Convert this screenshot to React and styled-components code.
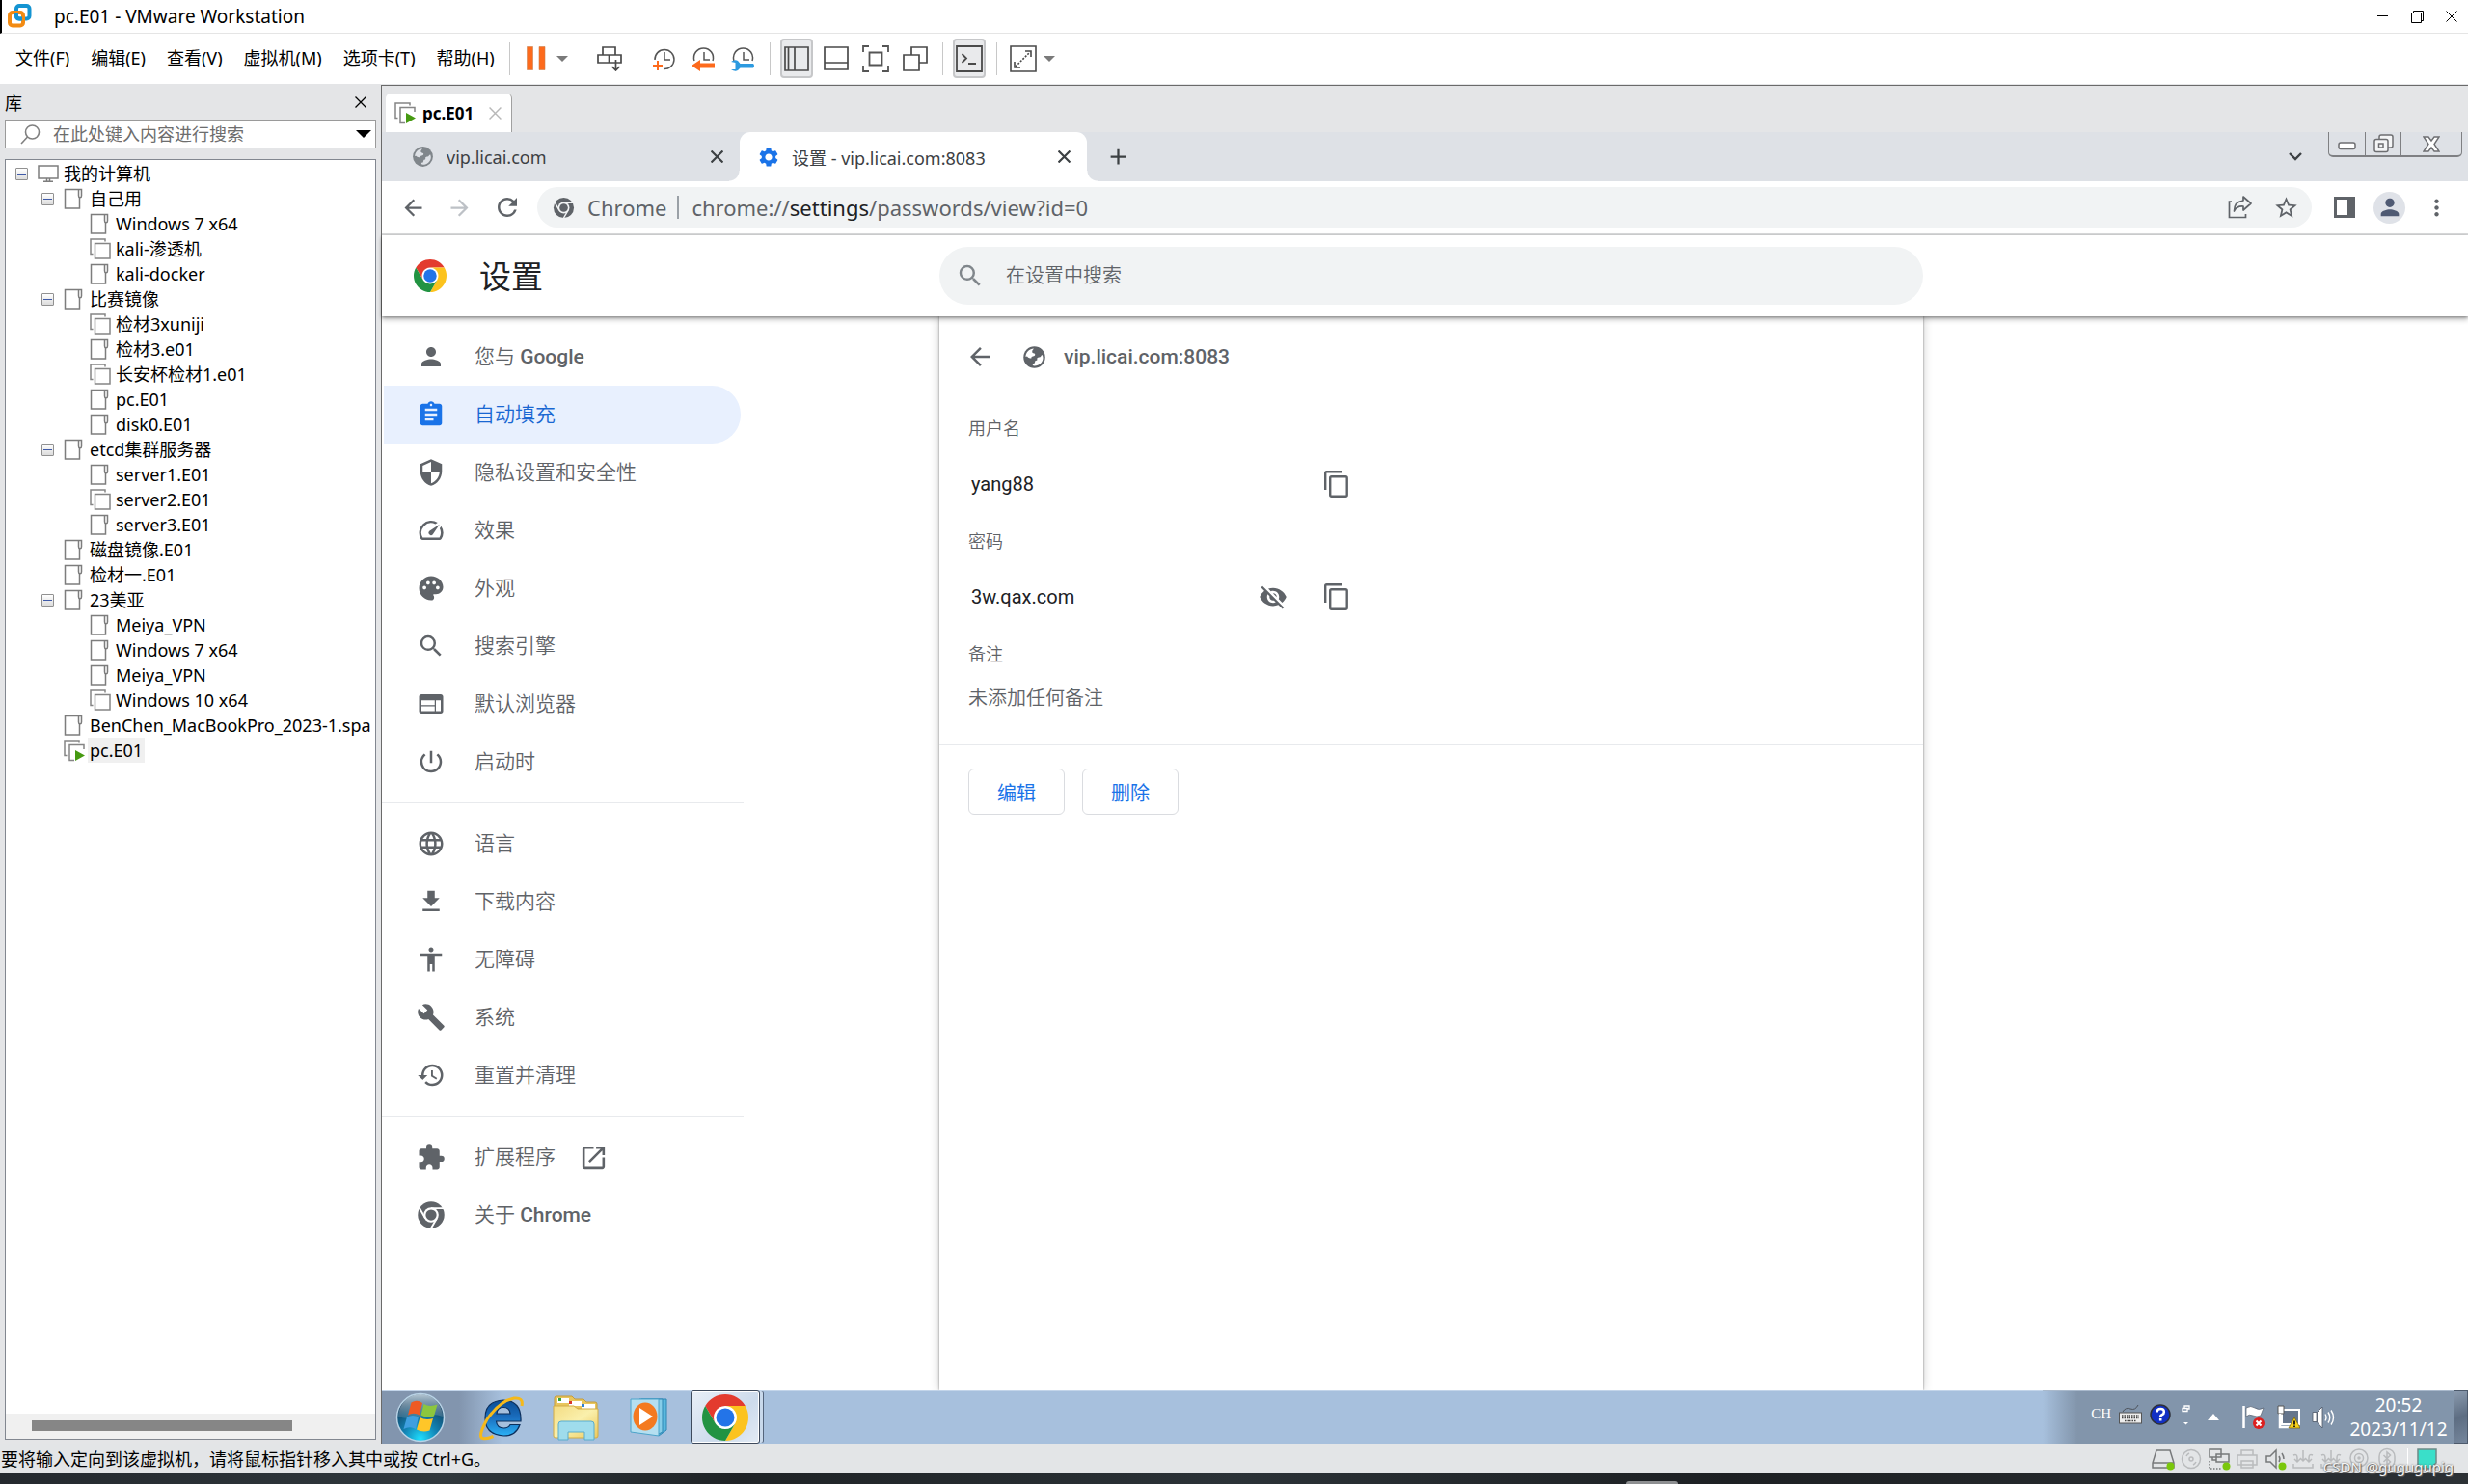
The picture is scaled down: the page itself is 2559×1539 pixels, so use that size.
import React from "react";
import styled, { createGlobalStyle, css } from "styled-components";
import {
    MdPerson, MdAssignment, MdSecurity, MdSpeed, MdPalette, MdSearch, MdWeb, MdPowerSettingsNew,
    MdLanguage, MdFileDownload, MdAccessibility, MdBuild, MdHistory, MdExtension, MdOpenInNew,
    MdVisibilityOff, MdArrowBack, MdArrowForward, MdRefresh, MdStarBorder, MdMoreVert, MdSettings,
    MdAdd,
} from "react-icons/md";

const systemFont = `"Noto Sans", "Noto Sans CJK SC", sans-serif`;
const webFont = `Roboto, "Noto Sans CJK SC", sans-serif`;

const GlobalStyle = createGlobalStyle`
    * {
        box-sizing: border-box;
    }
    body {
        margin: 0;
        background: #23282d;
        font-family: ${systemFont};
        font-size: 18px;
        color: #000;
    }
    button, input {
        font: inherit;
        color: inherit;
    }
    button {
        display: inline-flex;
        align-items: center;
        justify-content: center;
        padding: 0;
        border: none;
        background: transparent;
        cursor: pointer;
    }
    input {
        min-width: 0;
        padding: 0;
        border: none;
        outline: none;
        background: transparent;
    }
    svg {
        display: block;
        flex: none;
    }
`;

const Desktop = styled.div`
    display: flex;
    flex-direction: column;
    height: 100vh;
    overflow: hidden;
`;

/* ---------- host window ---------- */

const TitleBar = styled.header`
    display: flex;
    align-items: center;
    height: 35px;
    flex: none;
    padding: 0 11px 0 6px;
    border-left: 2px solid #000;
    border-bottom: 1px solid #e5e5e5;
    background: #fff;
`;
const WindowTitle = styled.h1`
    margin: 0 auto 0 22px;
    font-size: 19px;
    font-weight: 400;
    line-height: 34px;
`;
const WindowButtons = styled.div`
    display: flex;
    gap: 23px;
`;

const ToolBar = styled.div`
    display: flex;
    align-items: center;
    height: 52px;
    flex: none;
    padding-bottom: 1px;
    background: #fff;
`;
const MenuBar = styled.nav`
    display: flex;
    gap: 22px;
    width: 528px;
    padding: 0 0 3px 16px;
    white-space: nowrap;
`;
const ToolGroup = styled.div`
    display: flex;
    align-items: center;
    gap: 7px;
    height: 34px;
    padding: 0 11px 0 10px;
    border-left: 1px solid #c8c8c8;
`;
const ToolSplit = styled.div`
    display: flex;
    align-items: center;
`;
const ToolButton = styled.button`
    width: 34px;
    height: 41px;
    border-radius: 4px;
    ${({ $pressed }) => $pressed && css`
        border: 2px solid #c6c7c9;
        background: #e9eaec;
    `}
`;
const CaretButton = styled.button`
    width: 20px;
    height: 34px;
`;

const Workspace = styled.div`
    display: flex;
    flex: 1;
    min-height: 0;
    background: #e4e5e7;
`;

/* ---------- library ---------- */

const Library = styled.aside`
    display: flex;
    flex-direction: column;
    width: 395px;
    flex: none;
    padding: 0 5px 5px;
`;
const LibraryHeader = styled.div`
    display: flex;
    align-items: center;
    justify-content: space-between;
    height: 37px;
    padding-right: 10px;
`;
const LibrarySearch = styled.label`
    display: flex;
    align-items: center;
    height: 30px;
    margin-bottom: 11px;
    padding: 0 4px 0 15px;
    border: 1px solid #9a9a9a;
    background: #fff;
    input {
        flex: 1;
        margin-left: 13px;
    }
    input::placeholder {
        color: #6d6d6d;
        opacity: 1;
    }
`;
const TreePanel = styled.div`
    display: flex;
    flex-direction: column;
    flex: 1;
    min-height: 0;
    border: 1px solid #828790;
    background: #fff;
`;
const Tree = styled.ul`
    flex: 1;
    margin: 0;
    padding: 1px 0 0 10px;
    list-style: none;
    overflow: hidden;
`;
const TreeRow = styled.li`
    display: flex;
    align-items: center;
    height: 26px;
    padding-left: ${({ $depth }) => $depth * 27}px;
    white-space: nowrap;
`;
const TreeLabel = styled.span`
    margin-left: -2px;
    padding: 0 2px;
    line-height: 26px;
    ${({ $selected }) => $selected && css`
        background: #f0f0f0;
    `}
`;
const ExpanderSlot = styled.span`
    display: flex;
    width: 23px;
    flex: none;
`;
const IconSlot = styled.span`
    display: flex;
    width: 27px;
    flex: none;
`;
const Expander = styled.button`
    width: 13px;
    height: 13px;
    border: 1px solid #919191;
    border-radius: 1px;
    background: linear-gradient(#fff, #dcdcdc);
    &::before {
        content: '';
        width: 9px;
        height: 1px;
        background: #3f5aa8;
    }
`;
const ScrollTrack = styled.div`
    height: 26px;
    flex: none;
    padding: 7px 86px 7px 27px;
    background: #f0f0f0;
`;
const ScrollThumb = styled.div`
    height: 11px;
    background: #868686;
`;

/* ---------- guest screen ---------- */

const Guest = styled.main`
    display: flex;
    flex-direction: column;
    flex: 1;
    min-width: 0;
    margin-top: 1px;
    border: 1px solid #6a6a6a;
    border-right: none;
`;
const VmTabs = styled.div`
    display: flex;
    align-items: flex-end;
    height: 48px;
    flex: none;
    padding-left: 4px;
`;
const VmTab = styled.div`
    display: flex;
    align-items: center;
    width: 131px;
    height: 40px;
    padding: 0 10px 0 9px;
    border-right: 1px solid #a0a0a0;
    border-radius: 5px 5px 0 0;
    background: #fff;
    font-size: 17px;
    font-weight: 700;
    span {
        margin: 0 auto 0 6px;
    }
`;

const TabStrip = styled.div`
    display: flex;
    align-items: center;
    height: 51px;
    flex: none;
    background: #dee1e6;
    color: #3c4043;
`;
const Tab = styled.div`
    display: flex;
    align-items: center;
    width: 371px;
    height: 51px;
    padding: 0 17px 0 30px;
    span {
        margin: 0 auto 0 12px;
    }
    ${({ $active }) => $active && css`
        position: relative;
        width: 360px;
        padding-left: 18px;
        border-radius: 11px 11px 0 0;
        background: #fff;
        &::before,
        &::after {
            content: '';
            position: absolute;
            bottom: 0;
            width: 11px;
            height: 11px;
        }
        &::before {
            right: 100%;
            background: radial-gradient(circle at 0 0, transparent 10px, #fff 11px);
        }
        &::after {
            left: 100%;
            background: radial-gradient(circle at 100% 0, transparent 10px, #fff 11px);
        }
    `}
`;
const NewTab = styled.button`
    margin: 0 auto 0 19px;
`;
const TabSearch = styled.button`
    margin-right: 27px;
`;
const CaptionButtons = styled.div`
    display: flex;
    align-self: flex-start;
    height: 26px;
    margin-right: 6px;
    border: 1px solid #7f8083;
    border-width: 0 1px 2px;
    border-radius: 0 0 5px 5px;
`;
const CaptionButton = styled.button`
    width: ${({ $wide }) => ($wide ? 63 : 37)}px;
    & + & {
        border-left: 1px solid #7f8083;
    }
`;

const NavBar = styled.div`
    display: flex;
    align-items: center;
    height: 56px;
    flex: none;
    padding: 0 19px;
    border-bottom: 2px solid #dadbdc;
    background: #fff;
    color: #5f6368;
`;
const NavButtons = styled.div`
    display: flex;
    align-items: center;
    gap: 21px;
    margin-right: 16px;
    button:disabled {
        color: #bdc1c6;
    }
`;
const Omnibox = styled.div`
    display: flex;
    align-items: center;
    flex: 1;
    height: 42px;
    padding: 0 13px 0 16px;
    border-radius: 21px;
    background: #f1f3f4;
    font-size: 22px;
`;
const OmniboxChip = styled.span`
    margin-left: 13px;
    padding-right: 11px;
    border-right: 2px solid #9aa0a6;
    line-height: 24px;
`;
const Address = styled.span`
    margin: 0 auto 0 13px;
    b {
        color: #202124;
        font-weight: 400;
    }
`;
const OmniboxActions = styled.div`
    display: flex;
    gap: 20px;
`;
const BrowserActions = styled.div`
    display: flex;
    align-items: center;
    gap: 19px;
    margin-left: 23px;
`;
const Avatar = styled.button`
    width: 33px;
    height: 33px;
    border-radius: 50%;
    background: #dfe2e8;
    color: #4f5a73;
`;

/* ---------- settings page ---------- */

const settingsColumns = css`
    display: grid;
    grid-template-columns: minmax(578px, 1fr) minmax(0, 1020px) minmax(0, 1fr);
`;
const SettingsHeader = styled.header`
    ${settingsColumns}
    position: relative;
    z-index: 1;
    align-items: center;
    height: 84px;
    flex: none;
    background: #fff;
    box-shadow: 0 1px 3px rgba(0, 0, 0, .4), 0 4px 5px rgba(0, 0, 0, .2);
    font-family: ${webFont};
`;
const Brand = styled.div`
    display: flex;
    align-items: center;
    gap: 34px;
    padding-left: 33px;
    h2 {
        margin: 0;
        padding-top: 4px;
        color: #202124;
        font-size: 33px;
        font-weight: 400;
        line-height: 48px;
    }
`;
const SettingsSearch = styled.label`
    display: flex;
    align-items: center;
    height: 60px;
    padding: 0 30px 0 17px;
    border-radius: 30px;
    background: #f1f3f4;
    color: #80868b;
    font-size: 20px;
    font-weight: 350;
    input {
        flex: 1;
        margin-left: 22px;
    }
    input::placeholder {
        color: #5f6368;
        opacity: 1;
    }
`;
const SettingsBody = styled.div`
    ${settingsColumns}
    flex: 1;
    min-height: 0;
    overflow: hidden;
    background: #fff;
    font-family: ${webFont};
    font-weight: 350;
`;
const SideNav = styled.nav`
    width: 375px;
    padding-top: 12px;
`;
const NavSection = styled.div`
    & + & {
        margin-top: 12px;
        padding-top: 12px;
        border-top: 1px solid #e8eaed;
    }
`;
const NavItem = styled.a`
    display: flex;
    align-items: center;
    gap: 24px;
    height: 60px;
    margin: 0 3px 0 2px;
    padding-left: 34px;
    border-radius: 0 30px 30px 0;
    color: #5f6368;
    font-size: 21px;
    line-height: 30px;
    text-decoration: none;
    svg:first-child {
        margin-right: 6px;
    }
    b {
        font-weight: 500;
    }
    ${({ $active }) => $active && css`
        background: #e8f0fe;
        color: #1967d2;
        svg {
            color: #1a73e8;
        }
    `}
`;
const Card = styled.section`
    background: #fff;
    box-shadow: 0 0 2px rgba(0, 0, 0, .45), 0 0 10px rgba(0, 0, 0, .2);
    color: #5f6368;
`;
const CardHeader = styled.div`
    display: flex;
    align-items: center;
    height: 84px;
    padding-left: 27px;
    button {
        margin-right: 28px;
    }
    h3 {
        margin: 0 0 0 17px;
        font-size: 21px;
        font-weight: 500;
    }
`;
const CardFields = styled.div`
    display: grid;
    gap: 18px;
    padding: 21px 30px 33px;
    border-bottom: 1px solid #e8eaed;
`;
const Field = styled.div`
    display: flex;
    flex-direction: column;
    gap: ${({ $note }) => ($note ? 18 : 15)}px;
`;
const FieldLabel = styled.label`
    font-size: 18px;
    line-height: 24px;
`;
const FieldRow = styled.div`
    display: flex;
    align-items: center;
    gap: 37px;
    width: 394px;
    height: 60px;
    input {
        flex: 1;
        padding-left: 3px;
        color: #202124;
        font-size: 20px;
        font-weight: 400;
    }
`;
const Note = styled.output`
    font-size: 20px;
    line-height: 30px;
`;
const CardActions = styled.div`
    display: flex;
    gap: 18px;
    padding: 24px 30px;
`;
const ActionButton = styled.button`
    width: 100px;
    height: 48px;
    border: 1px solid #dadce0;
    border-radius: 6px;
    color: #1a73e8;
    font-size: 20px;
    font-weight: 400;
`;

/* ---------- guest taskbar ---------- */

const TaskBar = styled.footer`
    display: flex;
    align-items: stretch;
    height: 56px;
    flex: none;
    border-top: 1px solid #3d4652;
    background: linear-gradient(90deg, #8295ae 80px, #a7c0dd 125px);
    box-shadow: inset 0 1px #c3d5ea;
`;
const StartButton = styled.button`
    width: 80px;
    margin-right: 4px;
`;
const TaskButton = styled.button`
    width: 78px;
    ${({ $running }) => $running && css`
        width: 72px;
        margin-left: 2px;
        border: 1px solid #3e4a5c;
        border-radius: 3px;
        background: linear-gradient(135deg, #e9eff7, #cddbec 60%, #e3ebf5);
        box-shadow: inset 0 0 0 1px #fff, 4px 0 0 -1px #c9d9eb, 5px 0 0 -1px #55657c;
    `}
`;
const Tray = styled.div`
    display: flex;
    align-items: center;
    margin-left: auto;
    padding-left: 50px;
    background: linear-gradient(90deg, #a7c0dd, #8295ab 36px);
    box-shadow: inset 0 1px #a9b9cc;
    color: #fff;
`;
const InputMethod = styled.div`
    display: flex;
    align-items: center;
    gap: 8px;
    margin-right: 14px;
    padding-bottom: 6px;
    font-family: "Liberation Serif", serif;
    font-size: 15px;
`;
const TrayIcons = styled.div`
    display: flex;
    align-items: center;
    gap: 12px;
    margin: 0 12px 0 24px;
`;
const Clock = styled.time`
    width: 108px;
    font-size: 19px;
    line-height: 25px;
    text-align: center;
`;
const ShowDesktop = styled.button`
    align-self: stretch;
    width: 15px;
    margin-left: 3px;
    border: 1px solid #4d5a6c;
    background: linear-gradient(160deg, #8a9aae, #5d6d82 50%, #75869c);
`;

/* ---------- status bar ---------- */

const StatusBar = styled.div`
    position: relative;
    display: flex;
    align-items: center;
    justify-content: space-between;
    height: 30px;
    flex: none;
    padding: 0 32px 0 1px;
    background: #e3e5e7;
    line-height: 30px;
`;
const DeviceIcons = styled.div`
    display: flex;
    align-items: center;
    gap: 5px;
`;
const MessageLog = styled.span`
    display: flex;
    margin-left: 4px;
    padding-left: 9px;
    border-left: 1px solid #fff;
`;
const Watermark = styled.span`
    position: absolute;
    right: 15px;
    bottom: -3px;
    color: #f4f4f4;
    font-size: 15px;
    line-height: 20px;
    text-shadow: 0 0 2px #555, 1px 1px 1px #555;
`;
const Wallpaper = styled.div`
    display: flex;
    align-items: flex-end;
    justify-content: center;
    height: 11px;
    flex: none;
    padding-left: 867px;
    background: linear-gradient(90deg, #24292e, #30383d 18%, #1f2326 30%, #2b3237 50%, #1d2023 70%, #2c3135);
    &::before {
        content: '';
        width: 54px;
        height: 3px;
        border-radius: 3px 3px 0 0;
        background: #8d8f91;
    }
`;

/* ---------- drawings ---------- */

const VmwareLogo = () => (
    <svg width="26" height="26" viewBox="0 0 26 26" fill="none" strokeWidth="4">
        <rect x="9" y="2" width="13.500" height="13.500" rx="3" stroke="#1494d2" />
        <rect x="2" y="9" width="14" height="13.500" rx="3" stroke="#f28b13" />
        <path d="M9 10v2.500q0 3 3 3h3" stroke="#1494d2" />
    </svg>
);
const Caret = ({ color = "#7a7a7a", size = 12 }) => (
    <svg width={size} height={size / 2} viewBox="0 0 12 6"><path d="M0 0h12L6 6z" fill={color} /></svg>
);
const Cross = ({ size = 12, color = "#000", width = 1.3 }) => (
    <svg width={size} height={size} viewBox="0 0 12 12" stroke={color} strokeWidth={width}><path d="M.5.5l11 11M11.5.5l-11 11" /></svg>
);
const PageIcon = () => (
    <svg width="20" height="23" viewBox="0 0 20 23" fill="none" stroke="#7d7d7d" strokeWidth="1.5">
        <path d="M13 1.500H1.500v19.500H16.500V9" />
        <path d="M13 1.500h5.500V8q0 1.800-1.500 1.800T15.500 8V1.500" />
    </svg>
);
const VmIcon = ({ running }) => (
    <svg width="23" height="23" viewBox="0 0 23 23" fill="none" stroke="#858585" strokeWidth="1.500">
        <path d="M3.500 16.500H1V1h15v2.500" />
        <path d={running ? "M11 21.500H6V5.500h15V10" : "M5.500 5.500h15.500v15.500H5.500z"} />
        {running && <path d="M12 11v11l10-5.500z" fill="#469a12" stroke="none" />}
    </svg>
);
const MonitorIcon = () => (
    <svg width="22" height="18" viewBox="0 0 22 18" fill="none" stroke="#7d7d7d" strokeWidth="1.500">
        <path d="M1 1h20v13H1zM9.500 14v3M12.500 14v3M6 17.200h10" />
    </svg>
);
const Globe = ({ size, color = "#5f6368", land = "#fff" }) => (
    <svg width={size} height={size} viewBox="0 0 24 24">
        <circle cx="12" cy="12" r="10" fill={color} />
        <path d="M4 11.500C4 7.500 7.500 4 11.500 4L10 6q-.5 2 1 2.200 2 0 1.700 1.500-.2 1.200-2 1.300-1.700.2-1.500 1.800H8q-2-.3-2.700-1.600z" fill={land} />
        <path d="M20 12.500c0 4-3.500 7.500-8 7.500l-1.500-.5V18q2 .2 2-1.500T14 15q1-.5.500-1.500t1.500-1.500q1.500.2 2-1t1.500-1z" fill={land} />
    </svg>
);
const ChromeLogo = ({ size }) => (
    <svg width={size} height={size} viewBox="0 0 48 48">
        <circle cx="24" cy="24" r="13" fill="#fff" />
        <path fill="#e33b2e" d="M24 12h20.780a24 24 0 0 0-41.560 0L13.610 30A12 12 0 0 1 24 12z" />
        <path fill="#fcc31e" d="M34.390 30L24 48a24 24 0 0 0 20.780-36H24a12 12 0 0 1 10.390 18z" />
        <path fill="#229342" d="M13.610 30L3.220 12A24 24 0 0 0 24 48l10.390-18a12 12 0 0 1-20.780 0z" />
        <circle cx="24" cy="24" r="9.500" fill="#2374e8" />
    </svg>
);
const ChromeMono = ({ size, gap = "#fff" }) => (
    <svg width={size} height={size} viewBox="0 0 48 48" fill="#5f6368">
        <circle cx="24" cy="24" r="22" />
        <circle cx="24" cy="24" r="12.500" fill={gap} />
        <path d="M24 13h22M14.500 29.500L3.500 10.500M33.500 29.500L22.500 48.500" stroke={gap} strokeWidth="3" />
        <circle cx="24" cy="24" r="9" />
    </svg>
);
const CopyIcon = () => (
    <svg width="26" height="30" viewBox="0 0 26 30" fill="none" stroke="#5f6368" strokeWidth="2.400">
        <path d="M2.200 21V3.500q0-1.300 1.300-1.300H19" />
        <rect x="7.200" y="7.200" width="17.500" height="20.500" rx="1.500" />
    </svg>
);
const ClockFace = ({ children }) => (
    <svg width="26" height="28" viewBox="0 0 26 28" fill="none" stroke="#555" strokeWidth="1.500">{children}</svg>
);
const ShareIcon = () => (
    <svg width="28" height="26" viewBox="0 0 28 26" fill="none" stroke="#5f6368" strokeWidth="1.700">
        <path d="M5 7H2.500v16.500h17V20" />
        <path d="M17 2l8 7-8 7v-4q-7-.5-9.500 5Q7.500 7 17 6z" strokeLinejoin="round" />
    </svg>
);
const StartOrb = () => (
    <svg width="52" height="52" viewBox="0 0 52 52">
        <defs>
            <radialGradient id="orb" cx=".5" cy=".95" r=".8">
                <stop offset="0" stopColor="#1fe0ff" /><stop offset=".45" stopColor="#1283b4" /><stop offset="1" stopColor="#123c5c" />
            </radialGradient>
            <linearGradient id="orbShine" x2="0" y2="1">
                <stop offset="0" stopColor="#dce8f0" stopOpacity=".8" /><stop offset="1" stopColor="#9ab0c0" stopOpacity=".2" />
            </linearGradient>
        </defs>
        <circle cx="26" cy="26" r="24.500" fill="url(#orb)" stroke="#b9d3e6" strokeWidth="1.500" />
        <path d="M3 25a23 23 0 0 1 46 0q-10-4-23 0t-23 0z" fill="url(#orbShine)" />
        <path d="M16.500 10.500q6-3.500 11.500.5l-3 12.500q-6-3.500-12 0z" fill="#ee5a24" />
        <path d="M29.500 12q6 3.500 14 .5l-3.500 12q-7 3-13.500-1z" fill="#8cc63e" />
        <path d="M12 25.500q6-3 12 0l-3 12.500q-6-3.500-12.500 0z" fill="#3f9fe0" />
        <path d="M25.500 26q6 3.500 13.500 1l-3.500 12.500q-7 2.500-13.500-1z" fill="#ffc629" />
    </svg>
);
const ExplorerE = () => (
    <svg width="50" height="48" viewBox="0 0 50 48" fill="none">
        <defs>
            <linearGradient id="ie" x2="0" y2="1"><stop offset="0" stopColor="#0b4c94" /><stop offset=".5" stopColor="#1b6fc0" /><stop offset="1" stopColor="#2bb1f5" /></linearGradient>
        </defs>
        <path d="M46 28H20.500q.8 7 8 7 4.500 0 6.500-3.500h10Q41 43 28.500 43 9 42 9 24.500T28 6q19 .5 18 22zM21 20h14q-.5-6.500-7-6.500T21 20z" fill="url(#ie)" stroke="#0c2f5c" strokeWidth="1.200" />
        <path d="M47 12q2-9-8-8Q24 7 11 26 1 44 6.500 45.500q4 1 11-2" stroke="#f6b91a" strokeWidth="3" />
    </svg>
);
const FolderIcon = () => (
    <svg width="48" height="48" viewBox="0 0 48 48">
        <defs><linearGradient id="folder" x2="1" y2="1"><stop offset="0" stopColor="#f3dc83" /><stop offset=".5" stopColor="#faf0ac" /><stop offset="1" stopColor="#edc95c" /></linearGradient></defs>
        <path d="M2 14V4q0-2 2-2h16l3 3h9l3 3h9q2 0 2 2v6z" fill="#e8c65d" stroke="#c49b3a" />
        <path d="M5 4h12v5H5zM17 7h13v5H17zM30 10h14v5H30z" fill="#fff" />
        <path d="M6 4h3v3H6z" fill="#36a13a" /><path d="M17 7h3v3h-3z" fill="#d8372c" /><path d="M30 10h3v3h-3z" fill="#2f7fd0" />
        <path d="M1 12h21l4 3h21v28q0 2-2 2H3q-2 0-2-2z" fill="url(#folder)" stroke="#d2ac47" />
        <path d="M6 47V31q0-3 3-3h31q3 0 3 3v16H33v-8H16v8z" fill="#9fdcec" stroke="#5aaccc" />
    </svg>
);
const MediaIcon = () => (
    <svg width="44" height="42" viewBox="0 0 44 42">
        <path d="M12 2h26v32L30 40z" fill="#5bb9de" stroke="#2e86b4" />
        <path d="M10 2h24v34l-6 3z" fill="#86cde8" stroke="#2e86b4" />
        <path d="M1 2h29v38L1 36z" fill="#b5dff0" stroke="#4da4ca" />
        <ellipse cx="16" cy="20" rx="12.500" ry="14.500" fill="#f47a20" />
        <path d="M10 11v18l14-9z" fill="#fff" />
    </svg>
);
const Dot = () => <circle cx="19.500" cy="19.500" r="4" fill="#7ac70c" stroke="none" />;
const DeviceIcon = ({ faded, children }) => (
    <svg width="24" height="24" viewBox="0 0 24 24" fill="none" stroke={faded ? "#b9bbbd" : "#77797b"} strokeWidth="1.500">{children}</svg>
);

/* ---------- data ---------- */

const menus = ["文件(F)", "编辑(E)", "查看(V)", "虚拟机(M)", "选项卡(T)", "帮助(H)"];

const machines = [
    { depth: 0, icon: "host", open: true, name: "我的计算机" },
    { depth: 1, icon: "page", open: true, name: "自己用" },
    { depth: 2, icon: "page", name: "Windows 7 x64" },
    { depth: 2, icon: "vm", name: "kali-渗透机" },
    { depth: 2, icon: "page", name: "kali-docker" },
    { depth: 1, icon: "page", open: true, name: "比赛镜像" },
    { depth: 2, icon: "vm", name: "检材3xuniji" },
    { depth: 2, icon: "page", name: "检材3.e01" },
    { depth: 2, icon: "vm", name: "长安杯检材1.e01" },
    { depth: 2, icon: "page", name: "pc.E01" },
    { depth: 2, icon: "page", name: "disk0.E01" },
    { depth: 1, icon: "page", open: true, name: "etcd集群服务器" },
    { depth: 2, icon: "page", name: "server1.E01" },
    { depth: 2, icon: "vm", name: "server2.E01" },
    { depth: 2, icon: "page", name: "server3.E01" },
    { depth: 1, icon: "page", name: "磁盘镜像.E01" },
    { depth: 1, icon: "page", name: "检材一.E01" },
    { depth: 1, icon: "page", open: true, name: "23美亚" },
    { depth: 2, icon: "page", name: "Meiya_VPN" },
    { depth: 2, icon: "page", name: "Windows 7 x64" },
    { depth: 2, icon: "page", name: "Meiya_VPN" },
    { depth: 2, icon: "vm", name: "Windows 10 x64" },
    { depth: 1, icon: "page", name: "BenChen_MacBookPro_2023-1.spa" },
    { depth: 1, icon: "running", name: "pc.E01", selected: true },
];
const machineIcons = {
    host: <MonitorIcon />,
    page: <PageIcon />,
    vm: <VmIcon />,
    running: <VmIcon running />,
};

const sections = [
    [
        { icon: MdPerson, name: "您与", brand: "Google" },
        { icon: MdAssignment, name: "自动填充", active: true },
        { icon: MdSecurity, name: "隐私设置和安全性" },
        { icon: MdSpeed, name: "效果" },
        { icon: MdPalette, name: "外观" },
        { icon: MdSearch, name: "搜索引擎" },
        { icon: MdWeb, name: "默认浏览器" },
        { icon: MdPowerSettingsNew, name: "启动时" },
    ],
    [
        { icon: MdLanguage, name: "语言" },
        { icon: MdFileDownload, name: "下载内容" },
        { icon: MdAccessibility, name: "无障碍" },
        { icon: MdBuild, name: "系统" },
        { icon: MdHistory, name: "重置并清理" },
    ],
    [
        { icon: MdExtension, name: "扩展程序", external: true },
        { icon: ChromeMono, name: "关于", brand: "Chrome" },
    ],
];

/* ---------- parts ---------- */

const HostToolBar = () => (
    <ToolBar>
        <MenuBar>{menus.map(menu => <button key={menu}>{menu}</button>)}</MenuBar>
        <ToolGroup>
            <ToolSplit>
                <ToolButton aria-label="Suspend">
                    <svg width="20" height="25" viewBox="0 0 20 25" fill="#fd6a1c" stroke="#c9814f" strokeWidth=".6"><path d="M.5.5h6v24h-6zM13 .5h6v24h-6z" /></svg>
                </ToolButton>
                <CaretButton aria-label="Power"><Caret /></CaretButton>
            </ToolSplit>
        </ToolGroup>
        <ToolGroup>
            <ToolButton aria-label="Send keys">
                <svg width="26" height="26" viewBox="0 0 26 26" fill="none" stroke="#4a4a4a" strokeWidth="1.700">
                    <path d="M6 1h13v8H6zM1 9h11.500v8H1zM12.500 9H25v8H12.500zM19.500 14v11M15.500 21l4 4 4-4" />
                </svg>
            </ToolButton>
        </ToolGroup>
        <ToolGroup>
            <ToolButton aria-label="Take snapshot">
                <ClockFace><path d="M4 15a10 10 0 1 1 9 9.500M14 7v8h6" /><path d="M2 21h10M7 16v10" stroke="#fd6a1c" strokeWidth="2" /></ClockFace>
            </ToolButton>
            <ToolButton aria-label="Revert snapshot">
                <ClockFace><path d="M4 16a10 10 0 1 1 19 0M14 7v8h6" /><path d="M1 21l9-6v3.500h15v5H10V27z" fill="#fd6a1c" stroke="none" /></ClockFace>
            </ToolButton>
            <ToolButton aria-label="Manage snapshots">
                <ClockFace><path d="M4 16a10 10 0 1 1 19 0M14 7v8h6" /><path d="M1 17q4-3 7-1l2.500 3H24q2 2.200 0 4.500H10.500L8 26q-3 2-7-1h4.500v-7z" fill="#2c9ae0" stroke="none" /></ClockFace>
            </ToolButton>
        </ToolGroup>
        <ToolGroup>
            <ToolButton $pressed aria-label="Library">
                <svg width="26" height="26" viewBox="0 0 26 26" fill="none" stroke="#4a4a4a" strokeWidth="1.700"><path d="M1 1h24v24H1zM4.500 1v24M11 1v24" /></svg>
            </ToolButton>
            <ToolButton aria-label="Thumbnail bar">
                <svg width="26" height="26" viewBox="0 0 26 26" fill="none" stroke="#4a4a4a" strokeWidth="1.700"><path d="M1 1h24v23H1zM1 17h24" /></svg>
            </ToolButton>
            <ToolButton aria-label="Full screen">
                <svg width="28" height="28" viewBox="0 0 28 28" fill="none" stroke="#555" strokeWidth="1.800"><path d="M1 7V1h6M21 1h6v6M27 21v6h-6M7 27H1v-6M7.500 7.500h13v13h-13z" /></svg>
            </ToolButton>
            <ToolButton aria-label="Unity">
                <svg width="26" height="26" viewBox="0 0 26 26" fill="none" stroke="#4a4a4a" strokeWidth="1.700"><path d="M1 9h16v16H1zM9 9V1h16v16h-8" /></svg>
            </ToolButton>
        </ToolGroup>
        <ToolGroup>
            <ToolButton $pressed aria-label="Console">
                <svg width="28" height="28" viewBox="0 0 28 28" fill="none" stroke="#4a4a4a" strokeWidth="1.800"><path d="M1 1h26v26H1zM6.500 9l4.500 4.500-4.500 4.500M13 19h8" /></svg>
            </ToolButton>
        </ToolGroup>
        <ToolGroup>
            <ToolSplit>
                <ToolButton aria-label="Stretch guest">
                    <svg width="28" height="28" viewBox="0 0 28 28" fill="none" stroke="#4a4a4a" strokeWidth="1.600"><path d="M1 1h26v26H1zM16 6h6v6M5 17v6h6" /><path d="M6 22L21 7" strokeDasharray="2 1.500" /></svg>
                </ToolButton>
                <CaretButton aria-label="Stretch options"><Caret /></CaretButton>
            </ToolSplit>
        </ToolGroup>
    </ToolBar>
);

const LibraryPanel = () => (
    <Library>
        <LibraryHeader>库<button aria-label="Close library"><Cross /></button></LibraryHeader>
        <LibrarySearch>
            <svg width="21" height="21" viewBox="0 0 21 21" fill="none" stroke="#808080" strokeWidth="1.600"><circle cx="12.500" cy="8" r="7" /><path d="M7.500 13L1 20" /></svg>
            <input type="text" placeholder="在此处键入内容进行搜索" />
            <Caret color="#000" size={16} />
        </LibrarySearch>
        <TreePanel>
            <Tree>
                {machines.map((machine, index) => (
                    <TreeRow key={index} $depth={machine.depth}>
                        <ExpanderSlot>{machine.open && <Expander aria-label="Collapse" />}</ExpanderSlot>
                        <IconSlot>{machineIcons[machine.icon]}</IconSlot>
                        <TreeLabel $selected={machine.selected}>{machine.name}</TreeLabel>
                    </TreeRow>
                ))}
            </Tree>
            <ScrollTrack><ScrollThumb /></ScrollTrack>
        </TreePanel>
    </Library>
);

const BrowserChrome = () => (
    <>
        <TabStrip>
            <Tab>
                <Globe size={25} color="#80868b" land="#dee1e6" />
                <span>vip.licai.com</span>
                <button aria-label="Close tab"><Cross size={13} color="#3c4043" width={2} /></button>
            </Tab>
            <Tab $active>
                <MdSettings size={24} color="#1a73e8" />
                <span>设置 - vip.licai.com:8083</span>
                <button aria-label="Close tab"><Cross size={13} color="#3c4043" width={2} /></button>
            </Tab>
            <NewTab aria-label="New tab"><MdAdd size={27} /></NewTab>
            <TabSearch aria-label="Search tabs">
                <svg width="14" height="9" viewBox="0 0 14 9" fill="none" stroke="#3c4043" strokeWidth="2.400"><path d="M1 1l6 6 6-6" /></svg>
            </TabSearch>
            <CaptionButtons>
                <CaptionButton aria-label="Minimize">
                    <svg width="19" height="16" viewBox="0 0 19 16"><rect x="1" y="7" width="17" height="6.500" rx="2" fill="#fff" stroke="#6d6e71" strokeWidth="1.500" /></svg>
                </CaptionButton>
                <CaptionButton aria-label="Restore">
                    <svg width="21" height="20" viewBox="0 0 21 20" fill="#f4f5f6" stroke="#6d6e71" strokeWidth="1.500"><rect x="6" y="1" width="14" height="13" rx="2" /><rect x="1" y="5.500" width="14" height="13" rx="2" /><rect x="5.500" y="10" width="4.500" height="4" /></svg>
                </CaptionButton>
                <CaptionButton $wide aria-label="Close">
                    <svg width="18" height="17" viewBox="0 0 18 17" fill="#fff" stroke="#6d6e71" strokeWidth="1.400"><path d="M1 1h5l3 4 3-4h5l-5 7.500 5 7.500h-5l-3-4-3 4H1l5-7.500z" /></svg>
                </CaptionButton>
            </CaptionButtons>
        </TabStrip>
        <NavBar>
            <NavButtons>
                <button aria-label="Back"><MdArrowBack size={27} /></button>
                <button aria-label="Forward" disabled><MdArrowForward size={27} /></button>
                <button aria-label="Reload"><MdRefresh size={30} /></button>
            </NavButtons>
            <Omnibox>
                <ChromeMono size={23} gap="#f1f3f4" />
                <OmniboxChip>Chrome</OmniboxChip>
                <Address>chrome://<b>settings</b>/passwords/view?id=0</Address>
                <OmniboxActions>
                    <button aria-label="Share"><ShareIcon /></button>
                    <button aria-label="Bookmark"><MdStarBorder size={27} /></button>
                </OmniboxActions>
            </Omnibox>
            <BrowserActions>
                <button aria-label="Side panel">
                    <svg width="22" height="22" viewBox="0 0 22 22"><path d="M0 0h22v22H0zM3 3v16h11V3z" fill="#5f6368" fillRule="evenodd" /></svg>
                </button>
                <Avatar aria-label="Profile"><MdPerson size={28} /></Avatar>
                <button aria-label="Menu"><MdMoreVert size={27} /></button>
            </BrowserActions>
        </NavBar>
    </>
);

const SettingsNav = () => (
    <SideNav>
        {sections.map((items, index) => (
            <NavSection key={index}>
                {items.map(({ icon: Icon, name, brand, active, external }) => (
                    <NavItem key={name} href="#settings" $active={active}>
                        <Icon size={30} />
                        <span>{name}{brand && <> <b>{brand}</b></>}</span>
                        {external && <MdOpenInNew size={31} />}
                    </NavItem>
                ))}
            </NavSection>
        ))}
    </SideNav>
);

const PasswordCard = () => (
    <Card>
        <CardHeader>
            <button aria-label="Back"><MdArrowBack size={30} /></button>
            <Globe size={27} />
            <h3>vip.licai.com:8083</h3>
        </CardHeader>
        <CardFields>
            <Field>
                <FieldLabel htmlFor="username">用户名</FieldLabel>
                <FieldRow>
                    <input id="username" readOnly value="yang88" />
                    <button aria-label="Copy username"><CopyIcon /></button>
                </FieldRow>
            </Field>
            <Field>
                <FieldLabel htmlFor="password">密码</FieldLabel>
                <FieldRow>
                    <input id="password" readOnly value="3w.qax.com" />
                    <button aria-label="Hide password"><MdVisibilityOff size={30} /></button>
                    <button aria-label="Copy password"><CopyIcon /></button>
                </FieldRow>
            </Field>
            <Field $note>
                <FieldLabel htmlFor="note">备注</FieldLabel>
                <Note id="note">未添加任何备注</Note>
            </Field>
        </CardFields>
        <CardActions>
            <ActionButton>编辑</ActionButton>
            <ActionButton>删除</ActionButton>
        </CardActions>
    </Card>
);

const GuestTaskBar = () => (
    <TaskBar>
        <StartButton aria-label="Start"><StartOrb /></StartButton>
        <TaskButton aria-label="Internet Explorer"><ExplorerE /></TaskButton>
        <TaskButton aria-label="Explorer"><FolderIcon /></TaskButton>
        <TaskButton aria-label="Media Player"><MediaIcon /></TaskButton>
        <TaskButton $running aria-label="Chrome"><ChromeLogo size={48} /></TaskButton>
        <Tray>
            <InputMethod>
                CH
                <svg width="24" height="20" viewBox="0 0 24 20" fill="none"><path d="M4 7q3-5 8-3t8-4" stroke="#4d535b" /><rect x=".5" y="8" width="23" height="11" fill="#ededed" stroke="#555" /><path d="M3 11h18M3 13.500h18M6 16.500h12" stroke="#444" strokeWidth="1.500" strokeDasharray="1.500 1" /></svg>
                <svg width="22" height="22" viewBox="0 0 22 22"><circle cx="11" cy="11" r="10" fill="#1230c4" stroke="#2c2f38" strokeWidth="1.500" /><path d="M7.500 8.500q0-3.500 3.700-3.500t3.600 3.200q0 2-2 3t-1.500 2.800M11.200 15v2.500" fill="none" stroke="#fff" strokeWidth="2.600" /></svg>
                <svg width="16" height="22" viewBox="0 0 16 22" fill="none" stroke="#fff" strokeWidth="1.300"><path d="M4 4.500h5v3H4zM6 4V2h5v3H9.500" /><path d="M5 19h5l-2.500 2.500z" fill="#fff" stroke="none" /></svg>
            </InputMethod>
            <svg width="12" height="7" viewBox="0 0 12 7"><path d="M0 7l6-7 6 7z" fill="#fff" /></svg>
            <TrayIcons>
                <svg width="24" height="26" viewBox="0 0 24 26"><path d="M1.500 1v23" stroke="#fff" strokeWidth="2.500" /><path d="M4 3q5-3 9 0t9 0l-3 8q-4 2-8 0t-7 1z" fill="#fff" stroke="#555f6e" strokeWidth=".7" /><circle cx="17" cy="19" r="6" fill="#dc1f1f" /><path d="M14.500 16.500l5 5M19.500 16.500l-5 5" stroke="#fff" strokeWidth="2" /></svg>
                <svg width="24" height="26" viewBox="0 0 24 26"><path d="M5 5h18v15H5z" fill="#66768c" stroke="#fff" strokeWidth="2" /><path d="M1 1h6v8H1z" fill="#fff" stroke="#555" /><path d="M3 9v14h10" stroke="#fff" strokeWidth="2.500" fill="none" /><path d="M18 13l6 11H12z" fill="#f7d21e" stroke="#7a6300" strokeWidth=".7" /><path d="M18 16.500v4M18 21.500v1.500" stroke="#111" strokeWidth="1.800" /></svg>
                <svg width="24" height="24" viewBox="0 0 24 24" fill="none" stroke="#fff" strokeWidth="1.400"><path d="M1 6.500h4v10H1zM5.500 6.500L11 1v22l-5.500-6z" fill="#fff" stroke="#4b5666" strokeWidth=".8" /><path d="M14 8.500q2 3.500 0 7M17 6.500q3.500 5.500 0 11M20 4.500q5 7.500 0 15" /></svg>
            </TrayIcons>
            <Clock>20:52<br />2023/11/12</Clock>
            <ShowDesktop aria-label="Show desktop" />
        </Tray>
    </TaskBar>
);

const HostStatusBar = () => (
    <StatusBar>
        要将输入定向到该虚拟机，请将鼠标指针移入其中或按 Ctrl+G。
        <DeviceIcons>
            <DeviceIcon><path d="M5 3h14l4 13v5H1v-5zM1 16h22" /><Dot /></DeviceIcon>
            <DeviceIcon faded><circle cx="12" cy="12" r="9.500" /><circle cx="12" cy="12" r="2" /><path d="M7 9q1-2 3-3M17 15q-1 2-3 3" /></DeviceIcon>
            <DeviceIcon><path d="M2 2h12v8H2zM9 7h13v8H9zM5 10v3h4" /><path d="M2 14v8h12" strokeDasharray="1.500 1.500" /><Dot /></DeviceIcon>
            <DeviceIcon faded><path d="M6 8V3h12v5M2 8h20v10H2zM6 14h12v7H6z" /></DeviceIcon>
            <DeviceIcon><path d="M3 9h4l6-6v18l-6-6H3zM16 9q2 3 0 6M19 6q2 3 2 6" /><Dot /></DeviceIcon>
            <DeviceIcon faded><path d="M2 17v4h20v-4M12 3v11M9 11l3 3 3-3M2 8q4-2 4 3v4M3 12l3 3 3-3M22 8q-4-2-4 3v4M15 12l3 3 3-3" /></DeviceIcon>
            <DeviceIcon faded><path d="M2 17v4h20v-4M12 3v11M9 11l3 3 3-3M2 8q4-2 4 3v4M3 12l3 3 3-3M22 8q-4-2-4 3v4M15 12l3 3 3-3" /></DeviceIcon>
            <DeviceIcon faded><circle cx="12" cy="11" r="9" /><circle cx="12" cy="11" r="4.500" /><circle cx="12" cy="11" r="1" /></DeviceIcon>
            <DeviceIcon faded><rect x="4" y="1.500" width="16" height="20" rx="8" /><path d="M8.500 8l7 7-3.500 3V5l3.500 3-7 7" /></DeviceIcon>
            <MessageLog>
                <svg width="21" height="22" viewBox="0 0 21 22"><path d="M1 1h19v14l-6 6H1z" fill="#3adfc9" stroke="#6f8a88" strokeWidth="1.500" /></svg>
            </MessageLog>
        </DeviceIcons>
        <Watermark>CSDN @gugugupig</Watermark>
    </StatusBar>
);

const App = () => (
    <>
        <GlobalStyle />
        <Desktop>
            <TitleBar>
                <VmwareLogo />
                <WindowTitle>pc.E01 - VMware Workstation</WindowTitle>
                <WindowButtons>
                    <button aria-label="Minimize"><svg width="12" height="12" viewBox="0 0 12 12" stroke="#000"><path d="M0 5.500h11" /></svg></button>
                    <button aria-label="Restore"><svg width="13" height="13" viewBox="0 0 13 13" fill="none" stroke="#000"><path d="M.5 2.500h10v10H.500zM2.500 2.500v-2h10v10h-2" /></svg></button>
                    <button aria-label="Close"><Cross width={1} /></button>
                </WindowButtons>
            </TitleBar>
            <HostToolBar />
            <Workspace>
                <LibraryPanel />
                <Guest>
                    <VmTabs>
                        <VmTab><VmIcon running /><span>pc.E01</span><button aria-label="Close"><Cross size={13} color="#b8b8b8" /></button></VmTab>
                    </VmTabs>
                    <BrowserChrome />
                    <SettingsHeader>
                        <Brand><ChromeLogo size={34} /><h2>设置</h2></Brand>
                        <SettingsSearch><MdSearch size={30} /><input type="search" placeholder="在设置中搜索" /></SettingsSearch>
                    </SettingsHeader>
                    <SettingsBody>
                        <SettingsNav />
                        <PasswordCard />
                    </SettingsBody>
                    <GuestTaskBar />
                </Guest>
            </Workspace>
            <HostStatusBar />
            <Wallpaper />
        </Desktop>
    </>
);

export default App;
